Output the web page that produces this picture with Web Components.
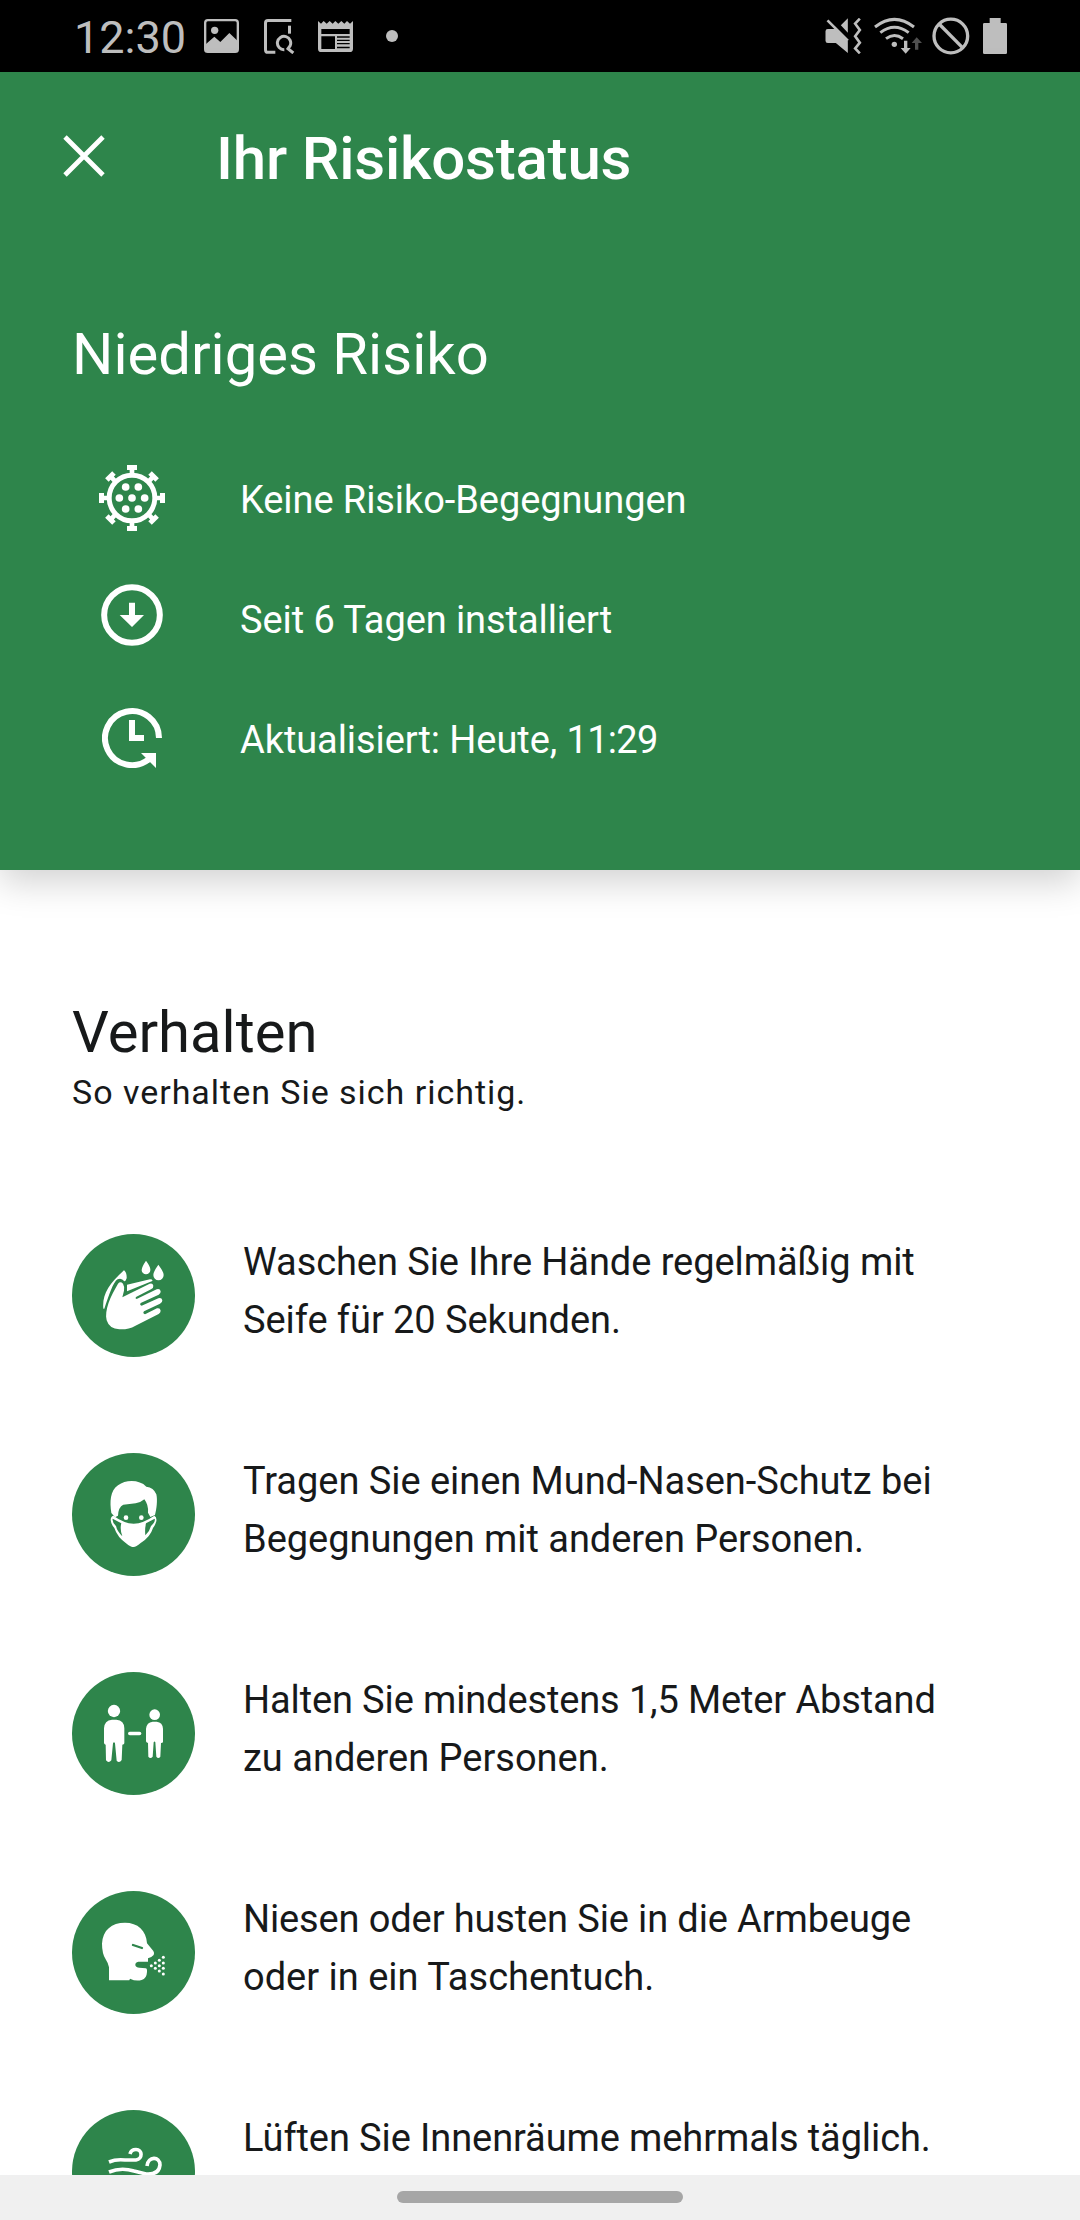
<!DOCTYPE html>
<html lang="de">
<head>
<meta charset="utf-8">
<title>Ihr Risikostatus</title>
<style>
  html, body { margin: 0; height: 2220px; overflow: hidden; background: #fff; }
  body { font-family: Roboto, "Liberation Sans", sans-serif; color: #17191a; }
</style>
</head>
<body>
<risk-screen></risk-screen>
<script>
const define = (name, html) => {
  const template = document.createElement('template');
  template.innerHTML = html;
  customElements.define(name, class extends HTMLElement {
    constructor() {
      super();
      this.attachShadow({ mode: 'open' }).append(template.content.cloneNode(true));
    }
  });
};

/* Icon library: each entry is a viewBox and its drawing. */
const icons = {
  image: ['432 57 105 102', `<rect x="435.500" y="60.500" width="98" height="95" rx="8" fill="none" stroke="currentColor" stroke-width="7"/><circle cx="464" cy="91" r="11" fill="currentColor"/><path fill="currentColor" d="M438 132L463 110L481 126L508 99L534 124V156H438Z"/>`],
  search: ['612 57 93 105', `<path fill="none" stroke="currentColor" stroke-width="9" d="M694 61.500H624Q616.500 61.500 616.500 69V149Q616.500 157 624 157H646"/><path stroke="currentColor" stroke-width="9" d="M688.500 77V101"/><path fill="none" stroke="currentColor" stroke-width="9" d="M673 149A20 20 0 1 1 690 138L684 146L700 159"/>`],
  news: ['774 60 105 96', `<path fill="currentColor" d="M774 63L783 71L791 63L800 71L809 63L818 71L826 63L835 71L844 63L853 71L861 63L870 71L879 63V146Q879 156 869 156H784Q774 156 774 146Z"/><path fill="#000" d="M784 87H869V102H784ZM784 109H825V147H784ZM831 109H869V113H831ZM831 119H869V123H831ZM831 129H869V133H831ZM831 140H869V145H831Z"/>`],
  mute: ['74 54 110 108', `<path fill="currentColor" d="M82 87H107L142 124V159L106 129H82Q75 129 75 122V94Q75 87 82 87ZM121 76L142 55V98Z"/><path stroke="#000" stroke-width="8" d="M86 54L146 114"/><path stroke="currentColor" stroke-width="8" d="M81 61L142 122"/><path fill="none" stroke="currentColor" stroke-width="8" d="M178 56L164 71L178 90L164 109L178 128L164 145L178 160"/>`],
  wifi: ['222 52 144 111', `<g fill="none" stroke="currentColor" stroke-width="9"><path d="M225 82Q283 36 342 82"/><path d="M241 99Q283 67 326 99"/><path d="M258 117Q283 98 309 117"/></g><circle cx="283" cy="134" r="8" fill="currentColor"/><path fill="currentColor" d="M312 123H322V145H332L317 162L302 145H312Z"/><path fill="#505050" d="M345 150H355V130H366L350 113L335 130H345Z"/>`],
  block: ['397 51 113 114', `<g fill="none" stroke="currentColor" stroke-width="10"><circle cx="453" cy="108" r="50.500"/><path d="M418 72L488 143"/></g>`],
  battery: ['549 54 72 108', `<path fill="currentColor" d="M569 54H602V69H617Q621 69 621 73V158Q621 162 617 162H553Q549 162 549 158V73Q549 69 553 69H569Z"/>`],
  close: ['0 0 42 42', `<path fill="none" stroke="currentColor" stroke-width="4.800" d="M2 2L40 40M40 2L2 40"/>`],
  virus: ['57 45 198 198', `<circle cx="156" cy="144" r="68.500" fill="none" stroke="currentColor" stroke-width="15"/><g fill="currentColor"><circle cx="156" cy="144" r="11.500"/><circle cx="118" cy="144" r="11.500"/><circle cx="194" cy="144" r="11.500"/><circle cx="137" cy="111" r="11.500"/><circle cx="175" cy="111" r="11.500"/><circle cx="137" cy="177" r="11.500"/><circle cx="175" cy="177" r="11.500"/>${[0,45,90,135,180,225,270,315].map(a => `<path transform="rotate(${a} 156 144)" d="M141 45H171V60H163V72H149V60H141Z"/>`).join('')}</g>`],
  download: ['63 402 186 186', `<circle cx="156" cy="495" r="83.500" fill="none" stroke="currentColor" stroke-width="18"/><path fill="currentColor" d="M147 458H165V495H192L156 531L119 495H147Z"/>`],
  clock: ['66 774 180 180', `<path fill="none" stroke="currentColor" stroke-width="18" d="M237 864A81 81 0 1 0 206 928"/><path fill="currentColor" d="M147 810H165V855H192V873H147ZM183 909H228V954Z"/>`],
  hands: ['36 42 369 369', `<path d="M130 266C126 225 145 194 192 151Q201 158 200 175Q197 184 193 184Q184 172 173 178C160 184 146 228 133 266ZM201 194L270 178Q279 178 277 183L201 214ZM258 122Q272 141 271 150A13 13 0 0 1 245 150Q245 141 258 122ZM295 134Q311 155 311 165A15.500 15.500 0 0 1 280 165Q280 155 295 134Z"/><path d="M174 191Q181 183 189 191Q194 199 192 212L187 232L269 191Q278 188 280 197Q281 204 273 208L228 231Q224 235 230 237L290 208Q300 205 302 214Q303 220 296 224L242 249Q238 255 245 257L295 235Q305 232 307 241Q308 247 300 251L252 274Q247 280 255 283L291 265Q301 263 302 272Q302 278 296 282L225 318Q207 329 178 328Q148 327 140 301C133 270 151 230 174 191Z"/>`],
  mask: ['36 39 369 369', `<path d="M154 219C149 185 150 153 174 136C198 118 239 119 259 140Q281 142 289 163C293 180 290 207 285 225L271 231L264 218Q266 195 253 178Q243 187 227 190L190 194Q175 201 174 227L165 232Z"/><circle cx="198" cy="233" r="7"/><circle cx="244" cy="233" r="7"/><path fill-rule="evenodd" d="M160 227Q192 250 221 251Q250 250 283 227Q291 231 289 244Q285 257 279 264Q271 291 242 309Q228 321 221 321Q212 321 200 311Q172 292 163 264Q153 253 152 240Q152 229 160 227ZM158 236Q156 246 168 258Q171 273 187 289Q179 267 184 250ZM284 236L258 250Q254 267 256 286Q270 272 273 258Q287 245 284 236Z"/>`],
  distance: ['36 36 369 369', `<circle cx="162" cy="153" r="18.500"/><path d="M156 179H169Q193 181 193 205V250Q192 254 187 254L185 300Q178 311 170 302L165 250Q162 244 159 250L154 301Q146 311 138 301L137 254Q132 252 132 248V205Q133 181 156 179Z"/><circle cx="284" cy="164" r="16"/><path d="M278 185H290Q308 187 309 206V245Q309 249 303 249L301 290Q295 298 289 290L286 247Q284 242 281 247L278 290Q271 298 265 290L264 249Q258 247 258 244V206Q260 187 278 185Z"/><rect x="204" y="215" width="40" height="11" rx="5.500"/>`],
  cough: ['36 33 369 369', `<path d="M147 301V262Q145 250 137 238Q126 220 126 191C128 150 155 128 195 128C233 128 259 151 261 190L280 213Q284 219 281 225Q274 233 264 235V245H235Q225 247 226 256Q228 263 238 263L257 265Q262 265 261 276Q260 296 245 300Q228 305 210 296L208 301Z"/><path d="M219 195L246 204" fill="none" stroke="#2e854b" stroke-width="7" stroke-linecap="round"/>${[[274,257],[286,249],[286,265],[298,241],[298,257],[298,273],[310,232],[310,249],[310,265],[310,282]].map(([x, y]) => `<circle cx="${x}" cy="${y}" r="4.500"/>`).join('')}`],
  wind: ['72 2110 123 123', `<g fill="none" stroke="currentColor" stroke-width="3.600"><path d="M109 2162Q116 2159 125 2160H136C143 2159 142.500 2149.500 136 2149.500Q131 2149.500 130 2154"/><path d="M109 2172Q121 2167 134 2171L146 2174Q159 2175 160 2165C160 2156 148 2156 147 2166"/><path d="M109 2182Q121 2179 134 2182Q143 2184 141 2191Q137 2196 133 2190"/></g>`]
};

customElements.define('ui-icon', class extends HTMLElement {
  connectedCallback() {
    const [box, drawing] = icons[this.getAttribute('name')];
    this.attachShadow({ mode: 'open' }).innerHTML = `<style>
      :host { display: block; flex: none; }
      svg { display: block; width: 100%; height: 100%; }
    </style><svg viewBox="${box}" fill="currentColor" aria-hidden="true">${drawing}</svg>`;
  }
});

define('status-bar', `<style>
  :host { display: flex; justify-content: space-between; height: 72px; flex: none; box-sizing: border-box; padding: 0 73px 0 74px; background: #000; color: #bebebe; }
  .side { display: flex; align-items: flex-start; }
  time { font-size: 45px; line-height: 54px; margin-top: 11px; width: 130px; }
</style>
<div class="side">
  <time>12:30</time>
  <ui-icon name="image" style="width:35px;height:34px;margin-top:19px"></ui-icon>
  <ui-icon name="search" style="width:31px;height:35px;margin:19px 0 0 25px"></ui-icon>
  <ui-icon name="news" style="width:35px;height:32px;margin:20px 0 0 23px"></ui-icon>
  <span style="width:12px;height:12px;border-radius:6px;background:currentColor;margin:30px 0 0 33px"></span>
</div>
<div class="side">
  <ui-icon name="mute" style="width:37px;height:36px;margin-top:18px"></ui-icon>
  <ui-icon name="wifi" style="width:48px;height:37px;margin:17px 0 0 12px"></ui-icon>
  <ui-icon name="block" style="width:38px;height:38px;margin:17px 0 0 10px"></ui-icon>
  <ui-icon name="battery" style="width:24px;height:36px;margin:18px 0 0 13px"></ui-icon>
</div>`);

define('app-header', `<style>
  :host { display: flex; align-items: center; height: 168px; padding-left: 63px; }
  ui-icon { width: 42px; height: 42px; }
  h1 { margin: 5px 0 0 111px; font-size: 60px; line-height: 72px; font-weight: 500; letter-spacing: -.2px; }
</style>
<ui-icon name="close"></ui-icon><h1><slot></slot></h1>`);

define('risk-fact', `<style>
  :host { display: flex; height: 120px; align-items: center; }
  .icon { display: flex; justify-content: center; width: 120px; }
  p { margin: 0 0 0 48px; font-size: 38px; line-height: 46px; letter-spacing: -.08px; }
</style>
<div class="icon"><slot name="icon"></slot></div><p><slot></slot></p>`);

define('risk-card', `<style>
  :host { display: block; flex: none; height: 798px; box-sizing: border-box; background: #2e854b; color: #fff; box-shadow: 0 12px 34px rgba(0,0,0,.18); }
  section { padding: 78px 72px 0; }
  h2 { margin: 0; font-size: 58px; line-height: 72px; font-weight: 400; }
  .facts { padding-top: 50px; }
  ui-icon { color: #fff; }
  .clock-time { letter-spacing: -.7px; }
</style>
<app-header>Ihr Risikostatus</app-header>
<section>
  <h2>Niedriges Risiko</h2>
  <div class="facts">
    <risk-fact><ui-icon slot="icon" name="virus" style="width:66px;height:66px;margin-bottom:4px"></ui-icon>Keine Risiko-Begegnungen</risk-fact>
    <risk-fact><ui-icon slot="icon" name="download" style="width:62px;height:62px;margin-bottom:10px"></ui-icon>Seit 6 Tagen installiert</risk-fact>
    <risk-fact><ui-icon slot="icon" name="clock" style="width:60px;height:60px;margin-bottom:4px"></ui-icon>Aktualisiert: Heute, <span class="clock-time">11:29</span></risk-fact>
  </div>
</section>`);

define('behavior-tip', `<style>
  :host { display: flex; height: 123px; }
  .disc { flex: none; width: 123px; height: 123px; border-radius: 50%; background: #2e854b; color: #fff; }
  p { margin: -1px 0 0 48px; font-size: 38px; line-height: 58px; white-space: nowrap; letter-spacing: var(--tracking, -.07px); }
</style>
<div class="disc"><slot name="icon"></slot></div><p><slot></slot></p>`);

define('behavior-section', `<style>
  :host { display: block; flex: 1; min-height: 0; overflow: hidden; padding: 126px 72px 0; }
  h2 { margin: 0; font-size: 58px; line-height: 72px; font-weight: 400; }
  .lead { margin: 0; font-size: 34px; line-height: 48px; letter-spacing: .97px; }
  .tips { display: flex; flex-direction: column; gap: 96px; padding-top: 118px; }
  ui-icon { width: 123px; height: 123px; }
  .tight { letter-spacing: -.13px; }
</style>
<h2>Verhalten</h2>
<p class="lead">So verhalten Sie sich richtig.</p>
<div class="tips">
  <behavior-tip><ui-icon slot="icon" name="hands"></ui-icon>Waschen Sie Ihre Hände regelmäßig mit<br>Seife für 20 Sekunden.</behavior-tip>
  <behavior-tip style="--tracking:-.04px"><ui-icon slot="icon" name="mask"></ui-icon>Tragen Sie einen Mund-Nasen-Schutz bei<br>Begegnungen mit anderen Personen.</behavior-tip>
  <behavior-tip style="--tracking:0"><ui-icon slot="icon" name="distance"></ui-icon><span class="tight">Halten Sie mindestens 1,5 Meter Abstand</span><br>zu anderen Personen.</behavior-tip>
  <behavior-tip style="--tracking:0"><ui-icon slot="icon" name="cough"></ui-icon><span class="tight">Niesen oder husten Sie in die Armbeuge</span><br>oder in ein Taschentuch.</behavior-tip>
  <behavior-tip style="--tracking:-.1px"><ui-icon slot="icon" name="wind"></ui-icon>Lüften Sie Innenräume mehrmals täglich.</behavior-tip>
</div>`);

define('gesture-bar', `<style>
  :host { display: flex; justify-content: center; flex: none; height: 45px; background: #f0f0f0; }
  span { width: 286px; height: 12px; border-radius: 6px; background: #a6a6a6; margin-top: 16px; }
</style><span></span>`);

define('risk-screen', `<style>
  :host { display: flex; flex-direction: column; width: 1080px; height: 2220px; overflow: hidden; background: #fff; }
  risk-card { position: relative; }
</style>
<status-bar></status-bar>
<risk-card></risk-card>
<behavior-section></behavior-section>
<gesture-bar></gesture-bar>`);
</script>
</body>
</html>
